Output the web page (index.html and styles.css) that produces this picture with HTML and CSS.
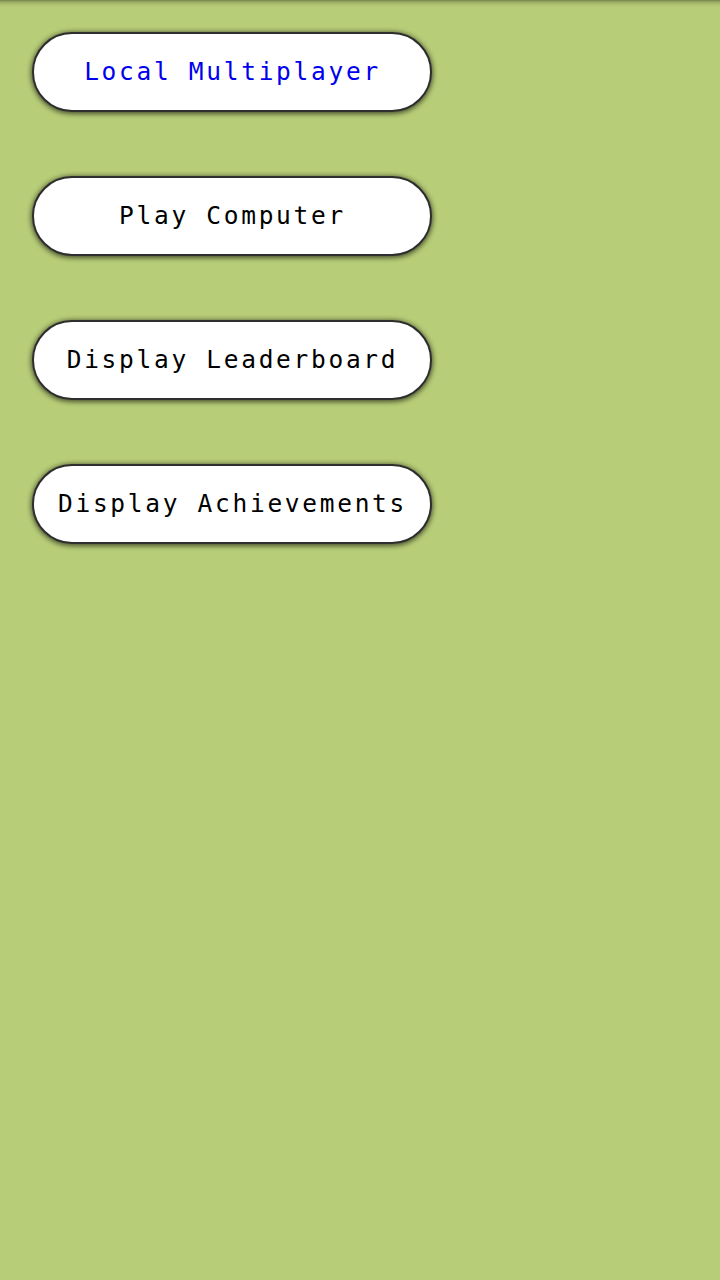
FILE: index.html
```html
<!DOCTYPE html>
<html>
<head>
<meta charset="utf-8">
<link rel="stylesheet" href="styles.css">
</head>
<body>
<div class="screen">
  <div class="topshade"></div>
  <div class="menu">
    <button class="btn btn-active">Local Multiplayer</button>
    <button class="btn">Play Computer</button>
    <button class="btn">Display Leaderboard</button>
    <button class="btn">Display Achievements</button>
  </div>
</div>
</body>
</html>
```
FILE: styles.css
```css
html, body {
  margin: 0;
  padding: 0;
}
body {
  width: 720px;
  height: 1280px;
  background: #b7cd77;
  overflow: hidden;
}
.screen {
  position: relative;
  width: 720px;
  height: 1280px;
}
.topshade {
  position: absolute;
  left: 0;
  top: 0;
  width: 720px;
  height: 8px;
  background: linear-gradient(to bottom, rgba(60,70,40,0.55) 0px, rgba(60,70,40,0.25) 2px, rgba(60,70,40,0.06) 5px, rgba(60,70,40,0) 8px);
}
.menu {
  display: flex;
  flex-direction: column;
  align-items: flex-start;
  gap: 64px;
  padding: 32px 0 0 32px;
}
.btn {
  box-sizing: border-box;
  width: 400px;
  height: 80px;
  border: 2px solid #2e2e2e;
  border-radius: 40px;
  background: #ffffff;
  box-shadow: 0 1px 5px 1px rgba(0,0,0,0.6);
  font-family: "DejaVu Sans Mono", "Liberation Mono", monospace;
  font-size: 24.5px;
  letter-spacing: 2.7px;
  color: #000000;
  display: flex;
  align-items: center;
  justify-content: center;
  padding: 0 0 2px 1px;
}
.btn-active {
  color: #0000ee;
}
```
